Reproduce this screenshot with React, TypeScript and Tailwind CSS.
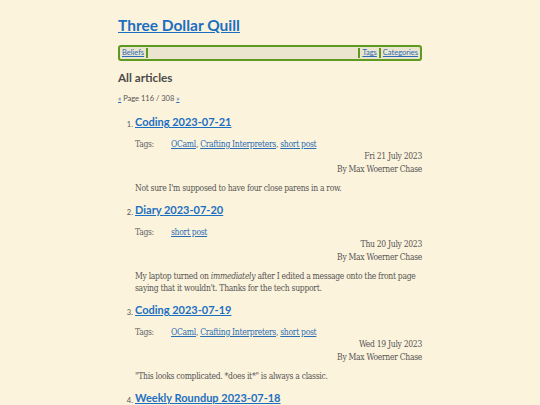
const sans = "font-['Lato','Noto_Sans',sans-serif]";
const serif = "font-['DejaVu_Serif_Condensed','DejaVu_Serif',serif]";

type Post = {
  title: string;
  tags: string[];
  date: string;
  body: React.ReactNode;
};

const posts: Post[] = [
  {
    title: "Coding 2023-07-21",
    tags: ["OCaml", "Crafting Interpreters", "short post"],
    date: "Fri 21 July 2023",
    body: "Not sure I'm supposed to have four close parens in a row.",
  },
  {
    title: "Diary 2023-07-20",
    tags: ["short post"],
    date: "Thu 20 July 2023",
    body: (
      <>
        My laptop turned on <em>immediately</em> after I edited a message onto the front page saying that it
        wouldn't. Thanks for the tech support.
      </>
    ),
  },
  {
    title: "Coding 2023-07-19",
    tags: ["OCaml", "Crafting Interpreters", "short post"],
    date: "Wed 19 July 2023",
    body: "\"This looks complicated. *does it*\" is always a classic.",
  },
  {
    title: "Weekly Roundup 2023-07-18",
    tags: ["short post"],
    date: "Tue 18 July 2023",
    body: "",
  },
];

function PostItem({ post, n }: { post: Post; n: number }) {
  return (
    <li className="flex">
      <span className={`${sans} w-[17px] shrink-0 pt-[4px] pr-[2px] text-right text-[7.5px] text-[#555]`}>{n}.</span>
      <div className="flex-1">
        <h2 className={`${sans} text-[11px] font-bold leading-[14px]`}>
          <a href="#" className="text-[#1b6fc2] underline">
            {post.title}
          </a>
        </h2>
        <div className={`${serif} mt-[9px] flex text-[8.5px] leading-[12px] tracking-[-0.3px] text-[#666]`}>
          <span className="w-[36px]">Tags:</span>
          <span>
            {post.tags.map((t, i) => (
              <span key={t}>
                <a href="#" className="text-[#2a6db5] underline">
                  {t}
                </a>
                {i < post.tags.length - 1 ? ", " : ""}
              </span>
            ))}
          </span>
        </div>
        <div className={`${serif} text-right text-[8.5px] leading-[12.5px] tracking-[-0.3px] text-[#555]`}>
          <p>{post.date}</p>
          <p>By Max Woerner Chase</p>
        </div>
        <p className={`${serif} mt-[7px] mb-[9px] text-[8.5px] leading-[12px] tracking-[-0.3px] text-[#555]`}>
          {post.body}
        </p>
      </div>
    </li>
  );
}

export default function App() {
  return (
    <div className="min-h-[405px] bg-[#fcf3dc]">
      <div className="mx-auto w-[304px] pt-[15px]">
        <h1 className={`${sans} text-[15.5px] font-bold leading-[20px]`}>
          <a href="#" className="text-[#1b6fc2] underline">
            Three Dollar Quill
          </a>
        </h1>
        <nav
          className={`${sans} mt-[10px] flex h-[16px] items-center rounded-[3px] border-2 border-[#5e9a1f] bg-[#ebe4cf] px-[2px] text-[7.5px] leading-[10px]`}
        >
          <a href="#" className="border-r-2 border-[#5e9a1f] pr-[2px] text-[#2a6db5] underline">
            Beliefs
          </a>
          <span className="flex-1" />
          <a href="#" className="border-x-2 border-[#5e9a1f] px-[2px] text-[#2a6db5] underline">
            Tags
          </a>
          <a href="#" className="pl-[2px] text-[#2a6db5] underline">
            Categories
          </a>
        </nav>
        <h2 className={`${sans} mt-[8px] text-[11.7px] font-bold leading-[16px] text-[#4a4a4a]`}>All articles</h2>
        <p className={`${sans} mt-[9px] text-[7.5px] leading-[10px] text-[#555]`}>
          <a href="#" className="text-[#2a6db5] underline">
            «
          </a>{" "}
          Page 116 / 308{" "}
          <a href="#" className="text-[#2a6db5] underline">
            »
          </a>
        </p>
        <ol className="mt-[11px]">
          {posts.map((p, i) => (
            <PostItem key={p.title} post={p} n={i + 1} />
          ))}
        </ol>
      </div>
    </div>
  );
}
